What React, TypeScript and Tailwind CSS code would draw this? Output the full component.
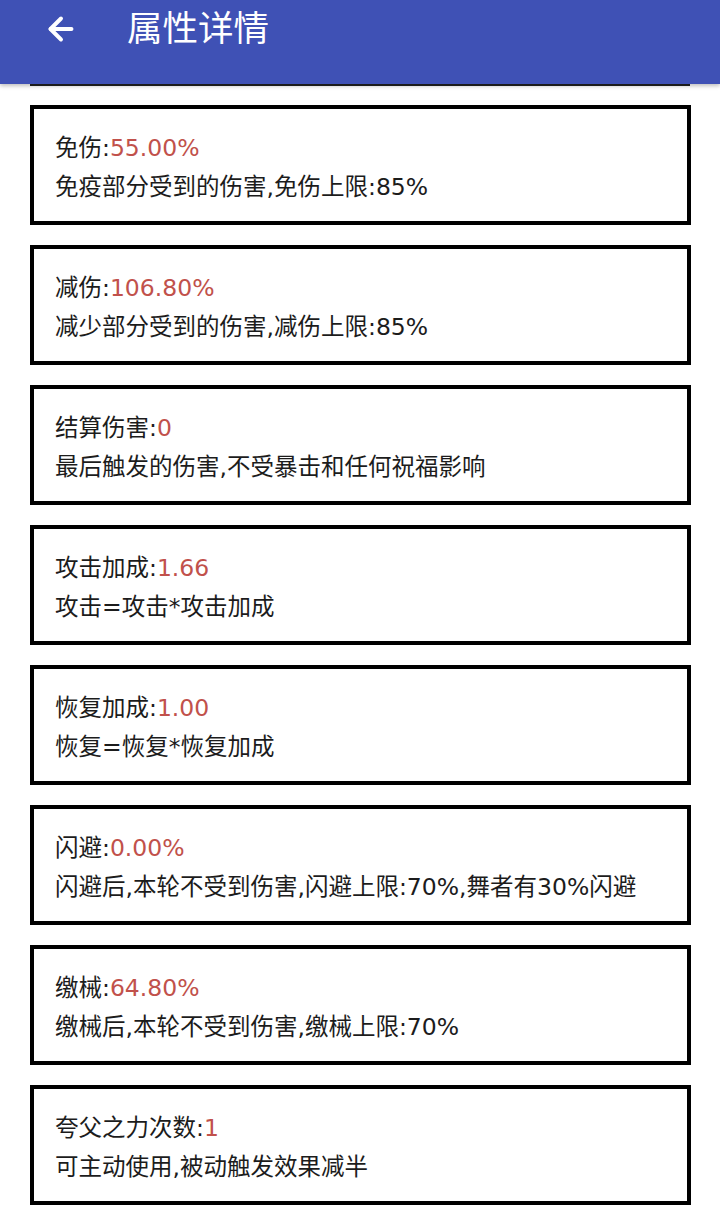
import { ArrowLeft } from "lucide-react"

const items = [
  { label: "免伤:", value: "55.00%", desc: "免疫部分受到的伤害,免伤上限:85%" },
  { label: "减伤:", value: "106.80%", desc: "减少部分受到的伤害,减伤上限:85%" },
  { label: "结算伤害:", value: "0", desc: "最后触发的伤害,不受暴击和任何祝福影响" },
  { label: "攻击加成:", value: "1.66", desc: "攻击=攻击*攻击加成" },
  { label: "恢复加成:", value: "1.00", desc: "恢复=恢复*恢复加成" },
  { label: "闪避:", value: "0.00%", desc: "闪避后,本轮不受到伤害,闪避上限:70%,舞者有30%闪避" },
  { label: "缴械:", value: "64.80%", desc: "缴械后,本轮不受到伤害,缴械上限:70%" },
  { label: "夸父之力次数:", value: "1", desc: "可主动使用,被动触发效果减半" },
]

export default function App() {
  return (
    <div
      className="relative h-[1205px] w-[720px] overflow-hidden bg-white"
      style={{ fontFamily: '"DejaVu Sans", "Noto Sans CJK SC", sans-serif' }}
    >
      <div className="relative z-10 h-[84px] bg-[#3f51b5] shadow-[0_2px_4px_rgba(0,0,0,0.25)]">
        <div className="flex h-[58px] items-center">
          <ArrowLeft className="ml-[43px] h-[36px] w-[36px] text-white" strokeWidth={2.6} />
          <h1 className="ml-[48px] text-[35.5px] leading-none text-white">属性详情</h1>
        </div>
      </div>
      <div className="mx-[30px] h-[2px] bg-[#222]" />
      <div className="flex flex-col gap-[20px] px-[30px] pt-[19px]">
        {items.map((it) => (
          <div
            key={it.label}
            className="h-[120px] w-[661px] border-[4px] border-black px-[21px] pt-[20px] text-[23.5px] leading-[39px] text-[#1c1c1c]"
          >
            <div>
              {it.label}
              <span className="text-[#c1514b]">{it.value}</span>
            </div>
            <div>{it.desc}</div>
          </div>
        ))}
      </div>
    </div>
  )
}
